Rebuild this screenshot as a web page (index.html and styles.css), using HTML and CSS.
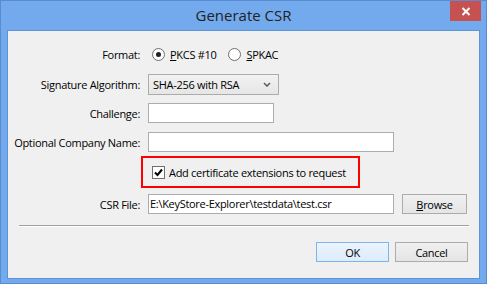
FILE: index.html
```html
<!DOCTYPE html>
<html lang="en">
<head>
    <meta charset="UTF-8">
    <title>Generate CSR</title>
    <link rel="stylesheet" href="styles.css">
</head>
<body>
    <div class="window">
        <div class="titlebar">
            <span></span>
            <span class="title">Generate CSR</span>
            <button class="close" aria-label="Close">
                <svg width="10" height="9" viewBox="0 0 10 9">
                    <path d="M1.5 1 L8.5 8 M8.5 1 L1.5 8" stroke="#fff" stroke-width="2" fill="none"/>
                </svg>
            </button>
        </div>

        <div class="client">
            <div class="form">
                <div class="row row-format">
                    <label class="label">Format:</label>
                    <div class="radios">
                        <span class="option">
                            <span class="radio checked"></span>
                            <span><u>P</u>KCS #10</span>
                        </span>
                        <span class="option">
                            <span class="radio"></span>
                            <span><u>S</u>PKAC</span>
                        </span>
                    </div>
                </div>

                <div class="row row-sig">
                    <label class="label">Signature Algorithm:</label>
                    <div class="combo">
                        <span>SHA-256 with RSA</span>
                        <svg width="8" height="5" viewBox="0 0 8 5">
                            <path d="M1 1 L4 4 L7 1" stroke="#5a5a5a" stroke-width="1.5" fill="none"/>
                        </svg>
                    </div>
                </div>

                <div class="row row-challenge">
                    <label class="label">Challenge:</label>
                    <div class="field field-short"></div>
                </div>

                <div class="row row-company">
                    <label class="label">Optional Company Name:</label>
                    <div class="field field-long"></div>
                </div>

                <div class="row row-ext">
                    <span class="label"></span>
                    <div class="highlight">
                        <span class="checkbox">
                            <svg width="11" height="11" viewBox="0 0 11 11">
                                <path d="M2 5.5 L4.5 8 L9 2.5" stroke="#000" stroke-width="2" fill="none"/>
                            </svg>
                        </span>
                        <span>Add certificate extensions to request</span>
                    </div>
                </div>

                <div class="row row-file">
                    <label class="label">CSR File:</label>
                    <div class="field field-long field-text">E:\KeyStore-Explorer\testdata\test.csr</div>
                    <button class="btn btn-browse"><u>B</u>rowse</button>
                </div>
            </div>

            <div class="separator"></div>

            <div class="actions">
                <button class="btn btn-default">OK</button>
                <button class="btn">Cancel</button>
            </div>
        </div>
    </div>
</body>
</html>
```

FILE: styles.css
```css
* {
    box-sizing: border-box;
}

body {
    margin: 0;
    font-family: "Open Sans", "Noto Sans", sans-serif;
    font-size: 11px;
    letter-spacing: -0.3px;
    color: #000;
}

.window {
    width: 487px;
    height: 284px;
    border: 1px solid #5a8bd0;
    background-color: #73aaee;
    display: flex;
    flex-direction: column;
}

.titlebar {
    height: 29px;
    flex-shrink: 0;
    display: grid;
    grid-template-columns: 1fr auto 1fr;
    align-items: start;
}

.title {
    font-size: 15px;
    letter-spacing: 0;
    color: #222;
    line-height: 29px;
}

.close {
    justify-self: end;
    margin-right: 5px;
    width: 31px;
    height: 20px;
    border: none;
    padding: 0;
    background-color: #c75050;
    display: flex;
    align-items: center;
    justify-content: center;
}

.client {
    flex: 1;
    margin: 0 6px 4px 6px;
    border: 1px solid #5e92d6;
    background-color: #f0f0f0;
    display: flex;
    flex-direction: column;
}

.form {
    padding: 13px 11px 0 11px;
    display: flex;
    flex-direction: column;
}

.row {
    display: flex;
    align-items: center;
    gap: 8px;
    height: 20px;
    white-space: nowrap;
}

.label {
    width: 121px;
    flex-shrink: 0;
    display: flex;
    justify-content: flex-end;
}

.row-sig { margin-top: 10px; height: 21px; }
.row-challenge { margin-top: 8px; }
.row-company { margin-top: 9px; }
.row-ext { margin-top: 4px; height: 32px; }
.row-file { margin-top: 6px; }

.radios {
    display: flex;
    gap: 12px;
    padding-left: 4px;
}

.option {
    display: flex;
    align-items: center;
    gap: 5px;
}

.radio {
    width: 13px;
    height: 13px;
    border: 1px solid #707070;
    border-radius: 50%;
    background: #fff;
    display: flex;
    align-items: center;
    justify-content: center;
}

.radio.checked::after {
    content: "";
    width: 5px;
    height: 5px;
    border-radius: 50%;
    background: #222;
}

.combo {
    width: 131px;
    height: 21px;
    border: 1px solid #acacac;
    background: linear-gradient(#f2f2f2, #e6e6e6);
    display: flex;
    align-items: center;
    justify-content: space-between;
    padding: 0 7px 0 4px;
}

.field {
    height: 20px;
    border: 1px solid #abadb3;
    background: #fff;
}

.field-short { width: 126px; }
.field-long { width: 246px; }

.field-text {
    padding-left: 1px;
    line-height: 18px;
}

.highlight {
    margin-left: -7px;
    width: 219px;
    height: 32px;
    border: 2px solid #f00;
    display: flex;
    align-items: center;
    gap: 4px;
    padding-left: 9px;
}

.checkbox {
    width: 13px;
    height: 13px;
    border: 1px solid #707070;
    background: #fff;
    display: flex;
    align-items: center;
    justify-content: center;
}

.btn {
    font-family: inherit;
    font-size: 11px;
    letter-spacing: -0.3px;
    color: #000;
    width: 73px;
    height: 20px;
    padding: 0;
    border: 1px solid #acacac;
    background: linear-gradient(#f0f0f0, #e5e5e5);
}

.btn-browse {
    width: 65px;
}

.btn-default {
    border-color: #7eb4ea;
    background: linear-gradient(#ecf4fc, #dcecfc);
}

.separator {
    margin: 11px 10px 0 11px;
    border-top: 1px solid #a0a0a0;
    border-bottom: 1px solid #fff;
}

.actions {
    display: flex;
    justify-content: flex-end;
    gap: 6px;
    padding: 15px 11px 0 0;
}
```
